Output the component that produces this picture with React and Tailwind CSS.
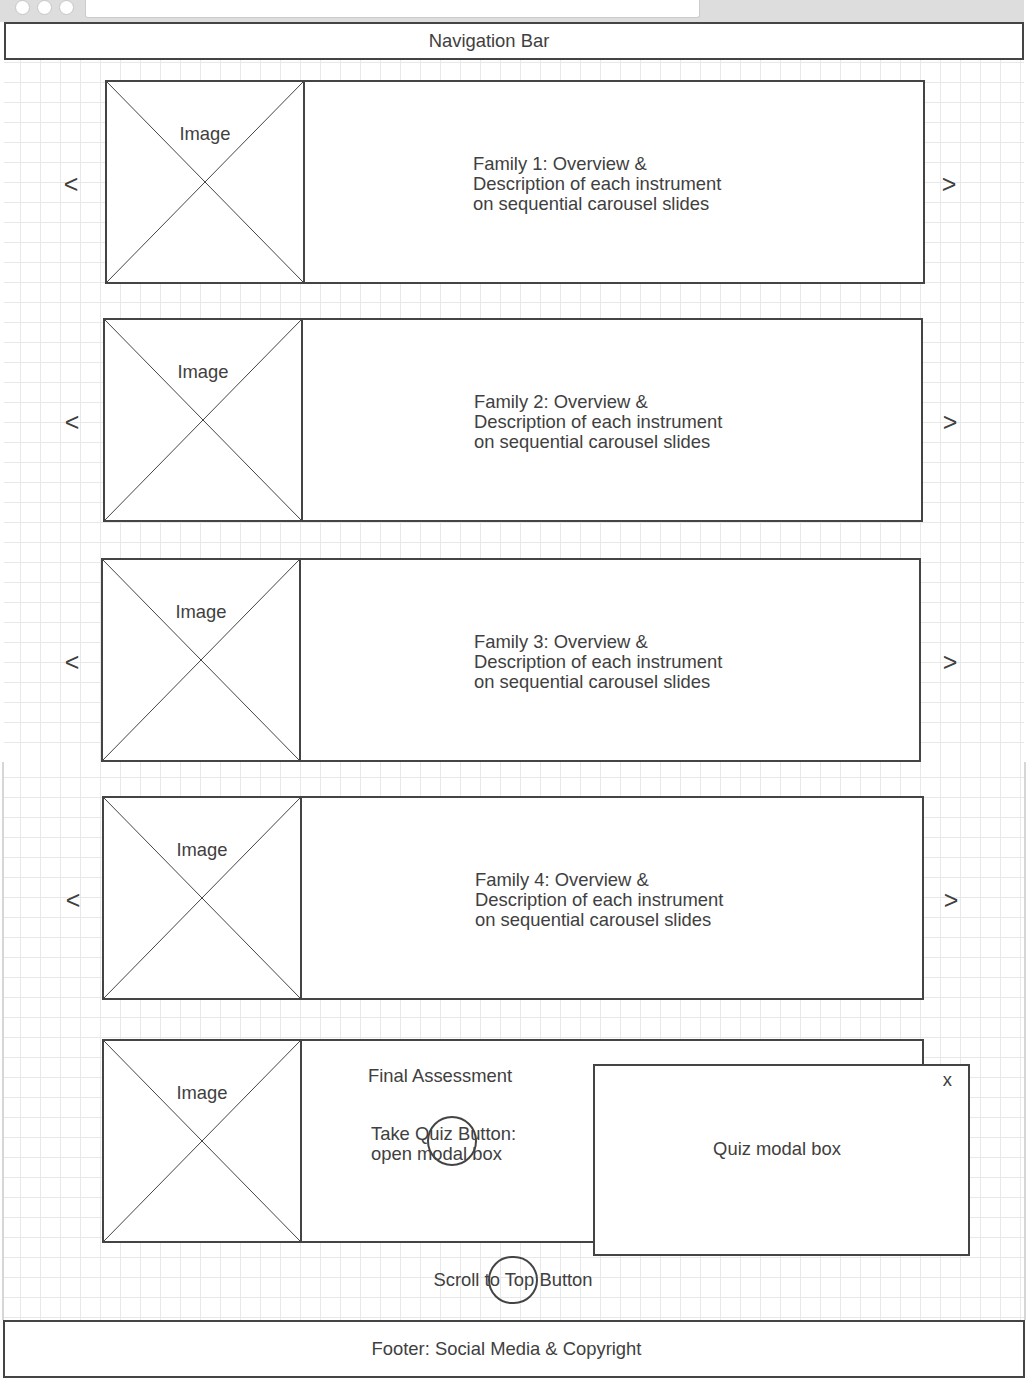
import React from "react";

// wireframe rows: instrument families shown as carousels
const families = [
  {
    id: 1,
    left: "ml-[55px]",
    card: "ml-[22px] w-[820px]",
    right: "ml-[12px]",
    text: "pl-[168px]",
  },
  {
    id: 2,
    left: "ml-[56px]",
    card: "ml-[19px] w-[820px]",
    right: "ml-[15px]",
    text: "pl-[171px]",
  },
  {
    id: 3,
    left: "ml-[56px]",
    card: "ml-[17px] w-[820px]",
    right: "ml-[17px]",
    text: "pl-[173px]",
  },
  {
    id: 4,
    left: "ml-[57px]",
    card: "ml-[17px] w-[822px]",
    right: "ml-[15px]",
    text: "pl-[173px]",
  },
];

const gridBg =
  "bg-[linear-gradient(to_right,#e8e8e8_1px,transparent_1px),linear-gradient(to_bottom,#e8e8e8_1px,transparent_1px)] bg-[size:20px_20px]";

const ImageBox = () => (
  <div className="relative w-[198px] h-full shrink-0 border-r-2 border-[#444] flex justify-center pt-[42px]">
    <svg className="absolute inset-0 w-full h-full" preserveAspectRatio="none" viewBox="0 0 100 100">
      <line x1="0" y1="0" x2="100" y2="100" stroke="#444" strokeWidth="1" vectorEffect="non-scaling-stroke" />
      <line x1="100" y1="0" x2="0" y2="100" stroke="#444" strokeWidth="1" vectorEffect="non-scaling-stroke" />
    </svg>
    <span className="relative leading-[20px]">Image</span>
  </div>
);

const Arrow = ({ children, className }) => (
  <span className={`w-[24px] shrink-0 text-center text-[25px] leading-none pt-[4px] ${className}`}>
    {children}
  </span>
);

const FamilyRow = ({ fam, className }) => (
  <div className={`flex items-center ${className}`}>
    <Arrow className={fam.left}>&lt;</Arrow>
    <div className={`h-[204px] shrink-0 border-2 border-[#444] bg-white flex ${fam.card}`}>
      <ImageBox />
      <div className={`flex-1 flex items-center pt-[4px] ${fam.text}`}>
        <p className="leading-[20px]">
          Family {fam.id}: Overview &amp;
          <br />
          Description of each instrument
          <br />
          on sequential carousel slides
        </p>
      </div>
    </div>
    <Arrow className={fam.right}>&gt;</Arrow>
  </div>
);

export default function App() {
  return (
    <div className="w-[1034px] min-h-[1387px] bg-white text-[18.4px] text-[#404040] font-['Liberation_Sans',Arial,sans-serif]">
      {/* browser chrome */}
      <div className="w-[1024px] h-[22px] bg-[#dddddd] flex items-start">
        <div className="flex gap-[7px] ml-[15px]">
          <span className="w-[15px] h-[15px] rounded-full bg-white border-[1.5px] border-[#c6c6c6]" />
          <span className="w-[15px] h-[15px] rounded-full bg-white border-[1.5px] border-[#c6c6c6]" />
          <span className="w-[15px] h-[15px] rounded-full bg-white border-[1.5px] border-[#c6c6c6]" />
        </div>
        <div className="ml-[11px] w-[615px] h-[18px] bg-white border border-t-0 border-[#cccccc] rounded-b-[3px]" />
      </div>

      {/* nav */}
      <div className="ml-[4px] w-[1020px] h-[38px] border-2 border-[#444] flex items-center justify-center pr-[50px]">
        Navigation Bar
      </div>

      {/* upper half */}
      <div className={`ml-[4px] w-[1020px] h-[702px] ${gridBg} bg-[position:16px_2px]`}>
        <FamilyRow fam={families[0]} className="pt-[20px]" />
        <FamilyRow fam={families[1]} className="mt-[34px]" />
        <FamilyRow fam={families[2]} className="mt-[36px]" />
      </div>

      {/* lower half */}
      <div className={`ml-[2px] w-[1024px] h-[558px] border-x-2 border-[#d6d6d6] ${gridBg} bg-[position:16px_15px]`}>
        <FamilyRow fam={families[3]} className="pt-[34px]" />

        {/* final assessment */}
        <div className="relative ml-[98px] mt-[39px] w-[822px] h-[204px] border-2 border-[#444] bg-white flex">
          <ImageBox />
          <div className="relative flex-1 leading-[20px]">
            <p className="pl-[66px] pt-[25px]">Final Assessment</p>
            <p className="pl-[69px] mt-[38px]">
              Take Quiz Button:
              <br />
              open modal box
            </p>
            <span className="absolute left-[125px] top-[75px] w-[50px] h-[50px] rounded-full border-2 border-[#444]" />
          </div>

          {/* quiz modal */}
          <div className="absolute left-[489px] top-[23px] w-[377px] h-[192px] border-2 border-[#444] bg-white">
            <span className="absolute right-[16px] top-[4px] leading-[20px]">x</span>
            <div className="flex justify-center pr-[9px] pt-[73px] leading-[20px]">Quiz modal box</div>
          </div>
        </div>

        {/* scroll to top */}
        <div className="relative mt-[13px] h-[48px] flex items-center justify-center pr-[2px]">
          <span className="absolute left-1/2 top-0 -translate-x-[26px] w-[50px] h-[48px] rounded-full border-2 border-[#444]" />
          <span className="relative leading-[20px]">Scroll to Top Button</span>
        </div>
      </div>

      {/* footer */}
      <div className="ml-[3px] w-[1022px] h-[58px] border-2 border-[#444] flex items-center justify-center pr-[15px]">
        Footer: Social Media &amp; Copyright
      </div>
    </div>
  );
}
